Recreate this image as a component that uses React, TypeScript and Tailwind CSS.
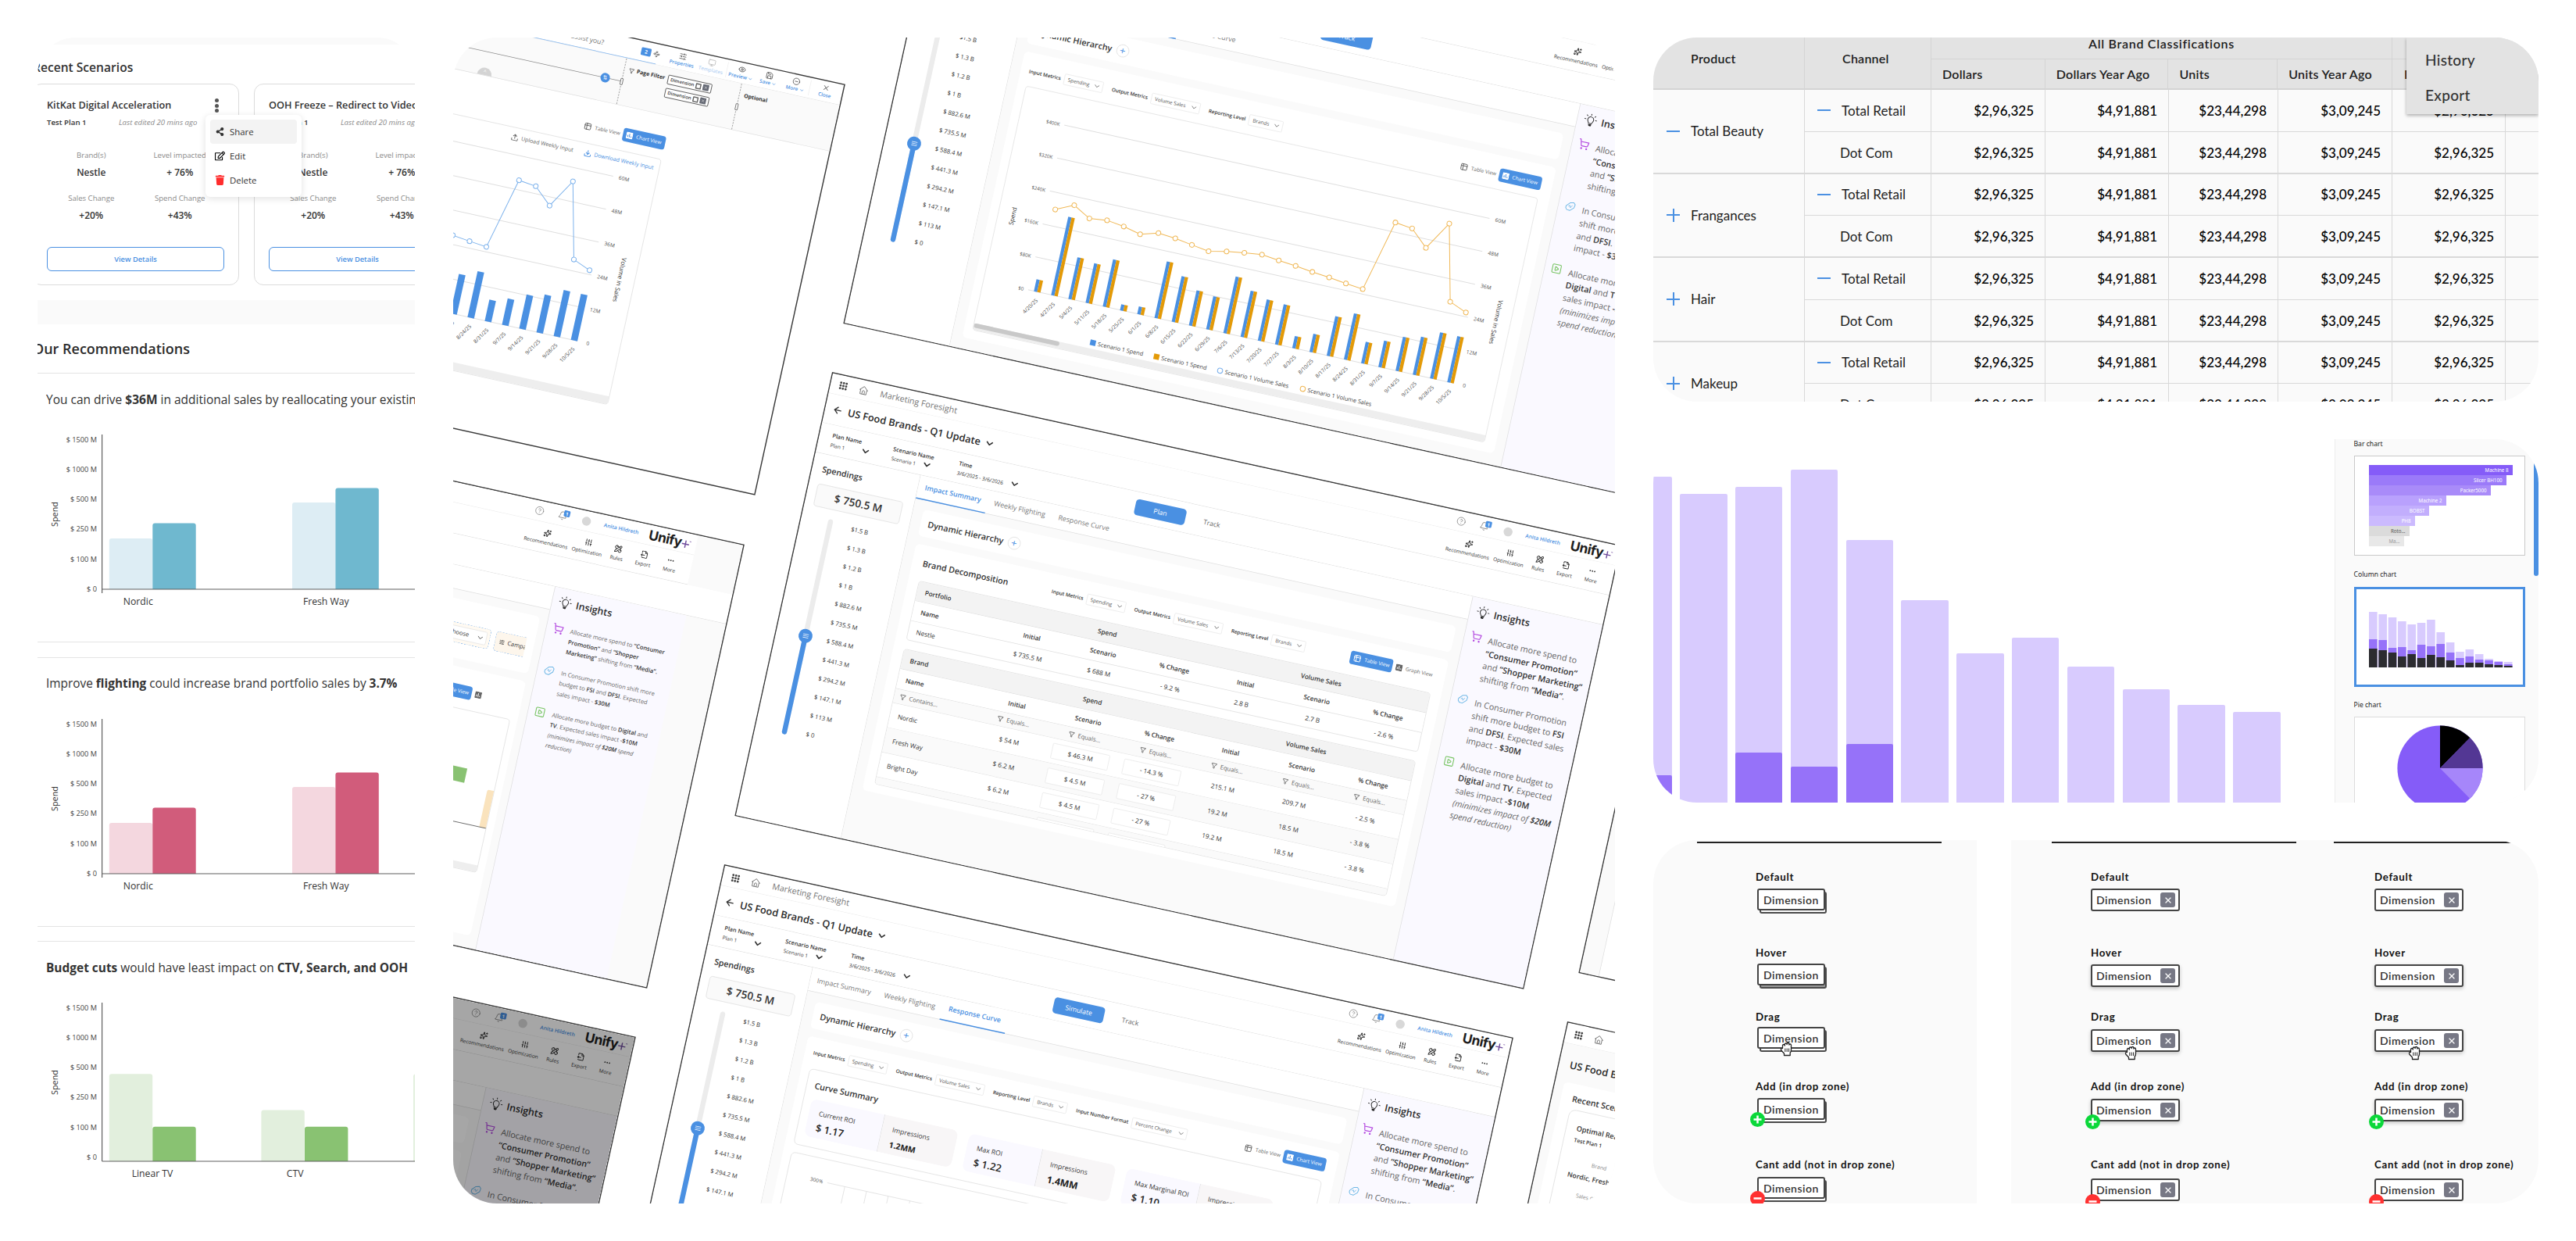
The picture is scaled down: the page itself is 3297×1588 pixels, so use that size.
import type { ReactNode } from "react";
import {
  ArrowLeft,
  Bell,
  ChevronDown,
  CircleHelp,
  CircleMinus,
  Download,
  Ellipsis,
  Eye,
  FileOutput,
  Filter,
  Monitor,
  PencilRuler,
  Save,
  ShoppingCart,
  SlidersHorizontal,
  SlidersVertical,
  Sparkles,
  SquarePlay,
  Table2,
  Upload,
  Waypoints,
  X,
} from "lucide-react";
import { FaRegEdit, FaShareAlt, FaTrash } from "react-icons/fa";

/* ------------------------------------------------------------------ */
/* Recommendations panel                                               */
/* ------------------------------------------------------------------ */

type Bar = { x: number; h: number; dark?: boolean };

type SpendChartProps = {
  light: string;
  dark: string;
  base: number;
  bars: Bar[];
  labels: { x: number; text: string }[];
};

const spendTicks = ["$ 1500 M", "$ 1000 M", "$ 500 M", "$ 250 M", "$ 100 M", "$ 0"];

function SpendChart({ light, dark, base, bars, labels }: SpendChartProps) {
  return (
    <svg width="483" height="250" viewBox="0 70 483 250" className="block">
      {spendTicks.map((tick, i) => (
        <text key={tick} x="76" y={89.5 + i * 38.3} textAnchor="end" fontSize="9.2" fill="#444">
          {tick}
        </text>
      ))}
      <text transform="translate(25.5 182) rotate(-90)" textAnchor="middle" fontSize="10.8" fill="#333">
        Spend
      </text>
      {bars.map((bar) => (
        <path
          key={bar.x}
          d={`M${bar.x} ${base}v${-(bar.h - 3)}q0 -3 3 -3h49.4q3 0 3 3v${bar.h - 3}z`}
          fill={bar.dark ? dark : light}
        />
      ))}
      <path d={`M82.6 80V283M82.6 ${base}H483`} stroke="#5f5f5f" strokeWidth="1.2" fill="none" />
      {labels.map((label) => (
        <text key={label.text} x={label.x} y={base + 19.5} textAnchor="middle" fontSize="12.2" fill="#333">
          {label.text}
        </text>
      ))}
    </svg>
  );
}

function Metric({ label, value }: { label: string; value: string }) {
  return (
    <div className="w-[117px] text-center">
      <p className="whitespace-nowrap text-[9.6px] leading-[18px] text-[#8a8a8a]">{label}</p>
      <p className="mt-[2px] text-[12px] font-semibold leading-[22px] text-[#333]">{value}</p>
    </div>
  );
}

function ScenarioCard({ title }: { title: string }) {
  return (
    <div className="h-[258px] w-[265px] shrink-0 rounded-xl border border-[#dcdcdc] bg-white px-[18px] pt-[17px]">
      <div className="flex h-5 items-center justify-between">
        <h3 className="whitespace-nowrap text-[12.7px] font-semibold text-[#333]">{title}</h3>
        <span className="flex flex-col gap-[1.5px] pr-[7px]">
          <i className="size-[5px] rounded-full bg-[#555]" />
          <i className="size-[5px] rounded-full bg-[#555]" />
          <i className="size-[5px] rounded-full bg-[#555]" />
        </span>
      </div>
      <div className="mt-[2px] flex h-5 items-center">
        <span className="w-[92px] text-[9.7px] font-semibold text-[#333]">Test Plan 1</span>
        <span className="whitespace-nowrap text-[9.6px] italic text-[#8a8a8a]">Last edited 20 mins ago</span>
      </div>
      <div className="mt-[23px] flex">
        <Metric label="Brand(s)" value="Nestle" />
        <Metric label="Level impacted" value="+ 76%" />
      </div>
      <div className="mt-[13px] flex">
        <Metric label="Sales Change" value="+20%" />
        <Metric label="Spend Change" value="+43%" />
      </div>
      <div className="mt-[29px] flex h-[31px] items-center justify-center rounded-md border border-[#4a90e2] text-[9.3px] font-semibold text-[#4a90e2]">
        View Details
      </div>
    </div>
  );
}

function RecommendationsPanel() {
  return (
    <section className="h-[1492px] w-[483px] shrink-0 overflow-hidden rounded-[48px] bg-white">
      <div className="h-[9px] bg-[#fafafa]" />
      <h2 className="-ml-[6px] mt-[18px] whitespace-nowrap text-[15.6px] font-semibold leading-[22px] text-[#333]">Recent Scenarios</h2>
      <div className="relative mt-[10px] flex">
        <div className="-ml-[7px] flex gap-[19px]">
          <ScenarioCard title="KitKat Digital Acceleration" />
          <ScenarioCard title="OOH Freeze – Redirect to Video" />
        </div>
        <div className="absolute left-[215px] top-[40px] w-[123px] rounded-md bg-white px-[6px] py-[6px] text-[11.4px] text-[#333] shadow-[0_2px_10px_rgba(0,0,0,0.12)]">
          <div className="flex h-[31px] items-center gap-[7px] rounded bg-[#f3f3f3] pl-[7px]">
            <FaShareAlt size={11} color="#333" />
            <span>Share</span>
          </div>
          <div className="flex h-[31px] items-center gap-[6px] pl-[6px]">
            <FaRegEdit size={13} color="#000" />
            <span>Edit</span>
          </div>
          <div className="flex h-[31px] items-center gap-[6px] pl-[6px]">
            <FaTrash size={13} color="#ff2d2d" />
            <span>Delete</span>
          </div>
        </div>
      </div>
      <div className="mt-[19px] h-[31px] bg-[#fafafa]" />
      <h2 className="-ml-[6px] mt-[18px] whitespace-nowrap text-[18px] font-semibold leading-[26px] text-[#2b2b2b]">Our Recommendations</h2>

      <div className="mt-[18px] h-[345px] border-y border-[#e4e4e4]">
        <p className="ml-[11px] mt-[21px] whitespace-nowrap text-[15.5px] leading-6 text-[#333]">
          You can drive <b>$36M</b> in additional sales by reallocating your existing
        </p>
        <div className="mt-[23px]">
          <SpendChart
            light="#ddedf4"
            dark="#6fb8cf"
            base={278}
            bars={[
              { x: 91.8, h: 65 },
              { x: 147.3, h: 84.6, dark: true },
              { x: 326, h: 111 },
              { x: 381.4, h: 129.5, dark: true },
            ]}
            labels={[
              { x: 128.8, text: "Nordic" },
              { x: 369.3, text: "Fresh Way" },
            ]}
          />
        </div>
      </div>

      <div className="mt-[19px] h-[345px] border-y border-[#e4e4e4]">
        <p className="ml-[11px] mt-[21px] whitespace-nowrap text-[15.4px] leading-6 text-[#333]">
          Improve <b>flighting</b> could increase brand portfolio sales by <b>3.7%</b>
        </p>
        <div className="mt-[23px]">
          <SpendChart
            light="#f4d7df"
            dark="#d15c7b"
            base={278}
            bars={[
              { x: 91.8, h: 65 },
              { x: 147.3, h: 84.6, dark: true },
              { x: 326, h: 111 },
              { x: 381.4, h: 129.5, dark: true },
            ]}
            labels={[
              { x: 128.8, text: "Nordic" },
              { x: 369.3, text: "Fresh Way" },
            ]}
          />
        </div>
      </div>

      <div className="mt-[18px] h-[345px] border-t border-[#e4e4e4]">
        <p className="ml-[11px] mt-[21px] whitespace-nowrap text-[15.45px] leading-6 text-[#333]">
          <b>Budget cuts</b> would have least impact on <b>CTV, Search, and OOH</b>
        </p>
        <div className="mt-[23px]">
          <SpendChart
            light="#e2efdd"
            dark="#89c272"
            base={283}
            bars={[
              { x: 91.8, h: 111.7 },
              { x: 147.3, h: 44.3, dark: true },
              { x: 286.4, h: 65.5 },
              { x: 342, h: 44.3, dark: true },
              { x: 481, h: 111.7 },
            ]}
            labels={[
              { x: 147, text: "Linear TV" },
              { x: 329.7, text: "CTV" },
            ]}
          />
        </div>
      </div>
    </section>
  );
}

/* ------------------------------------------------------------------ */
/* Planner screens                                                     */
/* ------------------------------------------------------------------ */

function ScreenFrame({ at, children }: { at: string; children: ReactNode }) {
  return (
    <div className={`absolute origin-top-left rotate-[12.38deg] scale-[0.718] overflow-hidden border-2 border-[#3a3a3a] bg-white text-[#333] ${at}`}>
      {children}
    </div>
  );
}

function AppsIcon() {
  return (
    <span className="grid grid-cols-3 gap-[1px]">
      {Array.from({ length: 9 }, (_, i) => (
        <i key={i} className="size-[4px] rounded-full bg-[#444]" />
      ))}
    </span>
  );
}

function HomeIcon() {
  return (
    <svg width="18" height="18" viewBox="0 0 18 18" fill="none" stroke="#666" strokeWidth="1.1">
      <path d="M1.5 9L9 2l7.5 7M3.5 7.5V16h11V7.5M7 16v-4.5a2 2 0 0 1 4 0V16" />
    </svg>
  );
}

function BulbIcon() {
  return (
    <svg width="25" height="25" viewBox="0 0 25 25" fill="none" stroke="#222" strokeWidth="1.3" strokeLinecap="round">
      <path d="M9.800 18.500c0-2-2.600-3.400-2.600-6.800a5.300 5.300 0 0 1 10.600 0c0 3.400-2.600 4.800-2.600 6.800z" />
      <path d="M10.300 20.500h4.400l-.8 2h-2.800z" fill="#222" />
      <path d="M12.500 1.500v2M4.800 4.300l1.300 1.300M20.200 4.300l-1.300 1.300M1.800 11.500h2M21.200 11.500h2" />
    </svg>
  );
}

function TagIcon() {
  return (
    <svg className="-mt-[1px] shrink-0" width="20" height="20" viewBox="0 0 20 20" fill="none" stroke="#6fb8e6" strokeWidth="1.400" strokeLinejoin="round">
      <path d="M2.500 10.500l6-6.500 6.500-1.500 3 3-1 6-6.500 6-5.500-.5-2.500-3z" />
      <path d="M6.500 10.500l2.500-2 1.500 4 3-5" strokeWidth="1.100" />
    </svg>
  );
}

function ChartTileIcon({ color }: { color: string }) {
  return (
    <svg width="12" height="12" viewBox="0 0 12 12" fill="none" className="shrink-0">
      <path d="M1.500 0h9q1.500 0 1.500 1.500v9q0 1.500-1.500 1.500h-9q-1.500 0-1.500-1.500v-9q0-1.500 1.500-1.500z" fill={color} />
      <path d="M3.200 9V5.500M6 9V2.800M8.800 9V7" stroke={color === "#fff" ? "#4a90e2" : "#fff"} strokeWidth="1.400" />
    </svg>
  );
}

function UnifyLogo() {
  return (
    <span className="flex h-6 w-[75px] items-center font-['Inter',sans-serif] text-[24px] font-bold tracking-[-0.7px] text-[#1c1c1c]">
      Unify
      <svg width="17" height="16" viewBox="0 0 17 16" className="mt-1 shrink-0">
        <path d="M7 1.500v13M0.500 8h13" stroke="#6d4a9c" strokeWidth="2" />
        <path d="M13.500 2h3" stroke="#6d4a9c" strokeWidth="1" />
      </svg>
    </span>
  );
}

// width and title are left open for the screens of which only the right part lies inside the panel
function TopBar({ width = "w-full", title = true }: { width?: string; title?: boolean }) {
  return (
    <div className={`flex h-[36px] items-center border-b border-[#ececec] bg-white pl-[16px] pr-[11px] ${width}`}>
      {title && (
        <>
          <AppsIcon />
          <span className="ml-[21px]">
            <HomeIcon />
          </span>
          <span className="ml-[21px] text-[15.1px] text-[#777]">Marketing Foresight</span>
        </>
      )}
      <CircleHelp className="ml-auto" size={17} strokeWidth={1.3} color="#777" />
      <span className="relative ml-[25px]">
        <Bell size={17} strokeWidth={1.3} color="#666" />
        <span className="absolute -right-[4px] -top-[2px] flex h-[11px] w-[11px] items-center justify-center rounded-[2px] bg-[#4a90e2] text-[8px] font-bold text-white">
          1
        </span>
      </span>
      <i className="ml-[27px] size-4 rounded-full bg-[#d8d8d8]" />
      <span className="ml-[24px] w-[66px] whitespace-nowrap text-[9.3px] font-semibold text-[#4a90e2]">Anita Hildreth</span>
      <span className="ml-[16px]">
        <UnifyLogo />
      </span>
    </div>
  );
}

const actions = [
  { label: "Recommendations", icon: Sparkles, width: "w-[90px]" },
  { label: "Optimization", icon: SlidersVertical, width: "w-[60px]" },
  { label: "Rules", icon: PencilRuler, width: "w-[48px]" },
  { label: "Export", icon: FileOutput, width: "w-[48px]" },
  { label: "More", icon: Ellipsis, width: "w-[48px]" },
];

function TitleBar({ width = "w-full", title = true }: { width?: string; title?: boolean }) {
  return (
    <div className={`flex h-[54px] items-center border-b border-[#dedede] bg-white pl-[13px] pr-[14px] ${width}`}>
      {title && (
        <>
          <ArrowLeft size={19} strokeWidth={2.4} />
          <h2 className="ml-[9px] whitespace-nowrap text-[17.8px] font-semibold text-[#2b2b2b]">US Food Brands - Q1 Update</h2>
          <ChevronDown className="ml-[7px]" size={19} strokeWidth={2.8} />
        </>
      )}
      <div className="ml-auto flex">
        {actions.map(({ label, icon: Icon, width: w }) => (
          <div key={label} className={`flex flex-col items-center gap-[1px] ${w}`}>
            <Icon size={14} strokeWidth={2.3} />
            <span className="text-[9.1px] leading-[17px]">{label}</span>
          </div>
        ))}
      </div>
    </div>
  );
}

function Field({ label, value, width }: { label: string; value: string; width: string }) {
  return (
    <div>
      <p className="text-[10.2px] font-semibold leading-[17px]">{label}</p>
      <div className={`flex h-[17px] items-center justify-between ${width}`}>
        <span className="whitespace-nowrap text-[9.2px] leading-[17px]">{value}</span>
        <ChevronDown size={19} strokeWidth={2.800} className="-mt-1" />
      </div>
    </div>
  );
}

type FilterBarProps = { mode?: string; active?: "mode" | "track"; offset?: string };

function FilterBar({ mode = "Plan", active = "mode", offset = "ml-[209px]" }: FilterBarProps) {
  const on = "bg-[#4a90e2] text-white";
  const off = "text-[#666]";
  return (
    <div className="flex h-[54px] items-center border-b border-[#dedede] bg-white pl-[23px]">
      <div className="w-[111px]">
        <Field label="Plan Name" value="Plan 1" width="w-[73px]" />
      </div>
      <div className="w-[120px]">
        <Field label="Scenario Name" value="Scenario 1" width="w-[74px]" />
      </div>
      <Field label="Time" value="3/6/2025 - 3/6/2026" width="w-[114px]" />
      <div className={`flex gap-[2px] text-[12px] ${offset}`}>
        <span className={`flex h-[29px] w-[92px] items-center justify-center rounded-md ${active === "mode" ? on : off}`}>{mode}</span>
        <span className={`flex h-[29px] w-[92px] items-center justify-center rounded-md ${active === "track" ? on : off}`}>Track</span>
      </div>
    </div>
  );
}

const amounts = ["$1.5 B", "$ 1.3 B", "$ 1.2 B", "$ 1 B", "$ 882.6 M", "$ 735.5 M", "$ 588.4 M", "$ 441.3 M", "$ 294.2 M", "$ 147.1 M", "$ 113 M", "$ 0"];

function SpendingSidebar() {
  return (
    <aside className="w-[192px] shrink-0 border-r border-[#dedede] bg-white">
      <h3 className="ml-[18px] mt-[16px] text-[14.8px] font-semibold leading-5">Spendings</h3>
      <div className="ml-[16px] mt-[17px] flex h-[41px] w-[156px] items-center justify-center rounded-md border border-[#dfdfdf] bg-[#fafafa] text-[19px] font-semibold">
        $ 750.5 M
      </div>
      <div className="mt-[9px] flex">
        <div className="relative ml-[48px] mt-[8px] h-[392px] w-[9px] rounded-full bg-[#ececec]">
          <div className="absolute bottom-0 h-[180px] w-[9px] rounded-full bg-[#4a90e2]" />
          <div className="absolute -left-[8px] top-[200px] flex size-[25px] flex-col items-center justify-center gap-[2px] rounded-full bg-[#4a90e2]">
            <i className="h-px w-[10px] bg-white" />
            <i className="h-px w-[10px] bg-white" />
            <i className="h-px w-[10px] bg-white" />
          </div>
        </div>
        <div className="ml-[34px]">
          {amounts.map((amount) => (
            <p key={amount} className="text-[10.8px] leading-[34px]">
              {amount}
            </p>
          ))}
        </div>
      </div>
    </aside>
  );
}

const tabNames = ["Impact Summary", "Weekly Flighting", "Response Curve"];

function Tabs({ active, offset = "" }: { active: string; offset?: string }) {
  return (
    <div className={`flex h-[42px] border-b border-[#dedede] bg-white text-[12.4px] ${offset}`}>
      {tabNames.map((tab) => (
        <span
          key={tab}
          className={
            tab === active
              ? "flex h-[42px] items-center border-b-2 border-[#4a90e2] px-3 font-semibold text-[#4a90e2]"
              : "flex h-[42px] items-center px-3 text-[#7a7a7a]"
          }
        >
          {tab}
        </span>
      ))}
    </div>
  );
}

function Hierarchy() {
  return (
    <div className="flex h-[48px] items-center gap-[8px] rounded-lg bg-white px-[13px]">
      <h3 className="text-[15px] font-semibold">Dynamic Hierarchy</h3>
      <span className="flex size-[23px] items-center justify-center rounded-full border border-[#dcdcdc] text-[18px] leading-none text-[#4a90e2]">+</span>
    </div>
  );
}

function Select({ label, value, width }: { label: string; value: string; width: string }) {
  return (
    <div className="flex items-center gap-[6px]">
      <span className="whitespace-nowrap text-[9px] font-semibold">{label}</span>
      <span className={`flex h-[20px] items-center justify-between whitespace-nowrap rounded-[2px] border border-[#e8e8e8] pl-[6px] pr-[3px] text-[9px] text-[#555] ${width}`}>
        {value}
        <ChevronDown size={14} strokeWidth={1.500} />
      </span>
    </div>
  );
}

function MetricSelects({ withFormat = false }: { withFormat?: boolean }) {
  return (
    <div className="flex gap-[16px]">
      <Select label="Input Metrics" value="Spending" width="w-[71px]" />
      <Select label="Output Metrics" value="Volume Sales" width="w-[89px]" />
      <Select label="Reporting Level" value="Brands" width="w-[62px]" />
      {withFormat && <Select label="Input Number Format" value="Percent Change" width="w-[101px]" />}
    </div>
  );
}

function ViewToggle({ active, second = "Chart View" }: { active: "table" | "chart"; second?: string }) {
  const on = "bg-[#4a90e2] text-white";
  const off = "text-[#666]";
  return (
    <div className="flex text-[9.2px]">
      <span className={`flex h-[24px] w-[77px] items-center gap-[6px] whitespace-nowrap rounded-[5px] pl-[6px] ${active === "table" ? on : off}`}>
        <Table2 size={14} strokeWidth={2.200} />
        Table View
      </span>
      <span className={`flex h-[24px] w-[77px] items-center gap-[6px] whitespace-nowrap rounded-[5px] pl-[6px] ${active === "chart" ? on : off}`}>
        <ChartTileIcon color={active === "chart" ? "#fff" : "#666"} />
        {second}
      </span>
    </div>
  );
}

function Strong({ children }: { children: ReactNode }) {
  return <b className="font-semibold text-[#333]">{children}</b>;
}

function Insights({ compact = false }: { compact?: boolean }) {
  const body = compact ? "text-[10.5px] leading-[18.6px]" : "text-[15px] leading-[22.6px]";
  const gap = compact ? "gap-[20px] mt-[27px]" : "gap-[23px] mt-[24px]";
  return (
    <aside className="w-[240px] shrink-0 border-l border-[#dedede] bg-[#faf9ff]">
      <div className="mt-[12px] flex h-6 items-center gap-[7px] pl-[11px]">
        <BulbIcon />
        <h3 className="text-[17.4px] font-semibold text-[#2b2b2b]">Insights</h3>
      </div>
      <div className={`flex flex-col whitespace-nowrap pl-[11px] text-[#666] ${body} ${gap}`}>
        <div className="flex gap-[12px]">
          <ShoppingCart className="-mt-[1px] shrink-0" size={20} strokeWidth={2} color="#b44be0" />
          {compact ? (
            <p>
              Allocate more spend to <Strong>“Consumer</Strong>
              <br />
              <Strong>Promotion”</Strong> and <Strong>“Shopper</Strong>
              <br />
              <Strong>Marketing”</Strong> shifting from <Strong>“Media”.</Strong>
            </p>
          ) : (
            <p>
              Allocate more spend to
              <br />
              <Strong>“Consumer Promotion”</Strong>
              <br />
              and <Strong>“Shopper Marketing”</Strong>
              <br />
              shifting from <Strong>“Media”</Strong>.
            </p>
          )}
        </div>
        <div className="flex gap-[12px]">
          <TagIcon />
          {compact ? (
            <p>
              In Consumer Promotion shift more
              <br />
              budget to <Strong>FSI</Strong> and <Strong>DFSI</Strong>. Expected
              <br />
              sales impact - <Strong>$30M</Strong>
            </p>
          ) : (
            <p>
              In Consumer Promotion
              <br />
              shift more budget to <Strong>FSI</Strong>
              <br />
              and <Strong>DFSI</Strong>. Expected sales
              <br />
              impact - <Strong>$30M</Strong>
            </p>
          )}
        </div>
        <div className="flex gap-[12px]">
          <SquarePlay className="-mt-[1px] shrink-0" size={20} strokeWidth={1.8} color="#77c463" />
          {compact ? (
            <p>
              Allocate more budget to <Strong>Digital</Strong> and
              <br />
              <Strong>TV</Strong>. Expected sales impact <Strong>-$10M</Strong>
              <br />
              <i>
                (minimizes impact of <Strong>$20M</Strong> spend
                <br />
                reduction)
              </i>
            </p>
          ) : (
            <p>
              Allocate more budget to
              <br />
              <Strong>Digital</Strong> and <Strong>TV</Strong>. Expected
              <br />
              sales impact <Strong>-$10M</Strong>
              <br />
              <i>
                (minimizes impact of <Strong>$20M</Strong>
                <br />
                spend reduction)
              </i>
            </p>
          )}
        </div>
      </div>
    </aside>
  );
}

type PlannerProps = FilterBarProps & { at: string; tab: string; tabOffset?: string; children: ReactNode };

function PlannerScreen({ at, tab, tabOffset, children, ...filter }: PlannerProps) {
  return (
    <ScreenFrame at={`h-[810px] w-[1440px] ${at}`}>
      <TopBar />
      <TitleBar />
      <FilterBar {...filter} />
      <div className="flex h-[664px]">
        <SpendingSidebar />
        <div className="flex-1 bg-[#fafafa]">
          <Tabs active={tab} offset={tabOffset} />
          <div className="flex flex-col gap-[14px] py-[16px] pl-[18px] pr-[17px]">
            <Hierarchy />
            {children}
          </div>
        </div>
        <Insights />
      </div>
    </ScreenFrame>
  );
}

function ColumnHeads() {
  return (
    <div className="flex h-[36px] items-center border-b border-[#dedede] bg-white font-semibold">
      <span className="w-[152px] pl-[14px]">Name</span>
      {["Initial", "Scenario", "% Change", "Initial", "Scenario", "% Change"].map((head, i) => (
        <span key={i} className="w-[130px] text-center">
          {head}
        </span>
      ))}
    </div>
  );
}

function GroupHead({ title }: { title: string }) {
  return (
    <div className="flex h-[36px] items-center border-b border-[#dedede] bg-[#f3f3f3] font-semibold">
      <span className="w-[152px] pl-[14px]">{title}</span>
      <span className="w-[390px] text-center">Spend</span>
      <span className="w-[390px] text-center">Volume Sales</span>
    </div>
  );
}

const brandRows = [
  { name: "Nordic", cells: ["$ 54 M", "$ 46.3 M", "- 14.3 %", "215.1 M", "209.7 M", "- 2.5 %"], bg: "bg-white" },
  { name: "Fresh Way", cells: ["$ 6.2 M", "$ 4.5 M", "- 27 %", "19.2 M", "18.5 M", "- 3.8 %"], bg: "bg-[#fafafa]" },
  { name: "Bright Day", cells: ["$ 6.2 M", "$ 4.5 M", "- 27 %", "19.2 M", "18.5 M", "- 3.8 %"], bg: "bg-white" },
  { name: "", cells: ["", "", "", "", "", ""], bg: "bg-[#fafafa]" },
];

function BrandDecomposition() {
  return (
    <div className="h-[450px] rounded-lg bg-white px-[19px]">
      <div className="flex h-[64px] items-center">
        <h3 className="w-[235px] text-[14.9px] font-semibold">Brand Decomposition</h3>
        <MetricSelects />
        <div className="ml-auto">
          <ViewToggle active="table" second="Graph View" />
        </div>
      </div>
      <div className="h-[108px] overflow-hidden rounded-md border border-[#dedede] text-[11.5px]">
        <GroupHead title="Portfolio" />
        <ColumnHeads />
        <div className="flex h-[36px] items-center">
          <span className="w-[152px] pl-[14px]">Nestle</span>
          {["$ 735.5 M", "$ 688 M", "- 9.2 %", "2.8 B", "2.7 B", "- 2.6 %"].map((cell) => (
            <span key={cell} className="w-[130px] text-center">
              {cell}
            </span>
          ))}
        </div>
      </div>
      <div className="mt-[16px] h-[247px] overflow-hidden rounded-md border border-[#dedede] text-[11.5px]">
        <GroupHead title="Brand" />
        <ColumnHeads />
        <div className="flex h-[26px] items-center border-b border-[#e4e4e4] bg-[#fafafa] text-[10.7px] text-[#666]">
          <span className="flex w-[152px] items-center gap-[6px] pl-[10px]">
            <Filter size={11} strokeWidth={2.5} />
            Contains...
          </span>
          {Array.from({ length: 6 }, (_, i) => (
            <span key={i} className="flex w-[130px] items-center justify-center gap-[6px]">
              <Filter size={11} strokeWidth={2.5} />
              Equals...
            </span>
          ))}
        </div>
        {brandRows.map((row, r) => (
          <div key={r} className={`flex h-[45px] items-center border-b border-[#e4e4e4] ${row.bg}`}>
            <span className="w-[152px] pl-[14px]">{row.name}</span>
            {row.cells.map((cell, i) => (
              <span key={i} className="flex w-[130px] justify-center">
                <span
                  className={
                    i === 1 || i === 2
                      ? "flex h-[28px] w-[104px] items-center justify-center rounded-[2px] border border-[#e8e8e8] bg-white"
                      : "flex h-[28px] items-center"
                  }
                >
                  {cell}
                </span>
              </span>
            ))}
          </div>
        ))}
      </div>
    </div>
  );
}

const weeks = [
  { date: "4/20/25", spend: 22, sales: 528.4 },
  { date: "4/27/25", spend: 143, sales: 513.7 },
  { date: "5/4/25", spend: 76, sales: 531 },
  { date: "5/11/25", spend: 72, sales: 527.4 },
  { date: "5/18/25", spend: 86, sales: 531.8 },
  { date: "5/25/25", spend: 11, sales: 539 },
  { date: "6/1/25", spend: 14, sales: 530 },
  { date: "6/8/25", spend: 103, sales: 532.8 },
  { date: "6/15/25", spend: 83, sales: 537.8 },
  { date: "6/22/25", spend: 64, sales: 542.5 },
  { date: "6/29/25", spend: 60, sales: 536 },
  { date: "7/6/25", spend: 103, sales: 531.5 },
  { date: "7/13/25", spend: 84, sales: 528 },
  { date: "7/20/25", spend: 75, sales: 531.6 },
  { date: "7/27/25", spend: 73, sales: 534.8 },
  { date: "8/3/25", spend: 22, sales: 538.8 },
  { date: "8/10/25", spend: 33, sales: 542 },
  { date: "8/17/25", spend: 72, sales: 546 },
  { date: "8/24/25", spend: 84, sales: 549.4 },
  { date: "8/31/25", spend: 39, sales: 421 },
  { date: "9/7/25", spend: 48, sales: 425 },
  { date: "9/14/25", spend: 62, sales: 453.5 },
  { date: "9/21/25", spend: 69, sales: 402.4 },
  { date: "9/28/25", spend: 84, sales: 538 },
  { date: "10/5/25", spend: 84, sales: 550.7 },
];

const weekX = (i: number) => 97.5 + i * 31.43;

// from: first week that is drawn, the builder screen shows only the tail of the season
function WeeklyChart({ compare, shift, from = 0 }: { compare: boolean; shift: number; from?: number }) {
  const stroke = compare ? "#f0b856" : "#7db2ec";
  const points = weeks.map((week, i) => ({ ...week, x: weekX(i) })).slice(from);
  return (
    <svg width="933" height="432" viewBox={`0 ${shift} 933 432`} className="block">
      {["$400K", "$320K", "$240K", "$160K", "$80K", "$0"].map((tick, i) => (
        <g key={tick}>
          <path d={`M81 ${53 + i * 60.1}H857`} stroke="#dcdcdc" strokeWidth="1.2" />
          {compare && (
            <text x="73" y={56.5 + i * 60.1} textAnchor="end" fontSize="8.7" fill="#555">
              {tick}
            </text>
          )}
        </g>
      ))}
      {["60M", "48M", "36M", "24M", "12M", "0"].map((tick, i) => (
        <text key={tick} x="877" y={56.5 + i * 60.1} textAnchor="middle" fontSize="9.3" fill="#555">
          {tick}
        </text>
      ))}
      {compare && (
        <text transform="translate(30 231) rotate(-90)" textAnchor="middle" fontSize="11" fill="#333">
          Spend
        </text>
      )}
      <text transform="translate(904 231) rotate(90)" textAnchor="middle" fontSize="11" fill="#333">
        Volume in Sales
      </text>
      {points.map((point) => (
        <g key={point.date}>
          <rect x={point.x - 6} y={354 - point.spend} width={compare ? 6 : 12} height={point.spend} fill="#4a90e2" />
          {compare && <rect x={point.x} y={354 - point.spend} width="6" height={point.spend} fill="#e39a08" />}
          <text transform={`translate(${point.x + 5} 369) rotate(-57)`} textAnchor="end" fontSize="9.3" fill="#444">
            {point.date}
          </text>
        </g>
      ))}
      <polyline points={points.map((point) => `${point.x},${point.sales - 325}`).join(" ")} fill="none" stroke={stroke} strokeWidth="1.4" />
      {points.map((point) => (
        <circle key={point.date} cx={point.x} cy={point.sales - 325} r="4.2" fill="#fff" stroke={stroke} strokeWidth="1.4" />
      ))}
      {compare && (
        <g fontSize="10.3" fill="#444">
          <rect x="209" y="416" width="10" height="10" fill="#4a90e2" />
          <text x="223" y="425">Scenario 1 Spend</text>
          <rect x="325" y="416" width="10" height="10" fill="#e39a08" />
          <text x="339" y="425">Scenario 1 Spend</text>
          <circle cx="446" cy="421" r="4.5" fill="#fff" stroke="#7db2ec" strokeWidth="1.5" />
          <text x="455" y="425">Scenario 1 Volume Sales</text>
          <circle cx="597" cy="421" r="4.5" fill="#fff" stroke="#f0b856" strokeWidth="1.5" />
          <text x="606" y="425">Scenario 1 Volume Sales</text>
        </g>
      )}
    </svg>
  );
}

function WeeklyFlighting() {
  return (
    <div className="h-[522px] rounded-lg bg-white pl-[15px] pr-[20px]">
      <div className="flex h-[60px] items-center pt-2">
        <MetricSelects />
        <div className="ml-auto">
          <ViewToggle active="chart" />
        </div>
      </div>
      <div className="h-[446px] overflow-hidden rounded-md border border-[#e0e0e0]">
        <WeeklyChart compare shift={0} />
        <div className="h-[14px] bg-[#eee]">
          <div className="h-[8px] w-[156px] rounded-full bg-[#c9c9c9]" />
        </div>
      </div>
    </div>
  );
}

function Kpi({ label, value, impressions, large }: { label: string; value: string; impressions: string; large?: boolean }) {
  return (
    <div className="flex h-[68px] w-[268px] shrink-0 overflow-hidden rounded-xl">
      <div className="w-[134px] border-r border-[#dcdcdc] bg-[#faf9ff] pl-[18px] pt-[14px]">
        <p className="whitespace-nowrap text-[12px] leading-[20px]">{label}</p>
        <p className="text-[18px] font-semibold leading-[31px] text-[#222]">{value}</p>
      </div>
      <div className="w-[134px] bg-[#f8f6f7] pl-[18px] pt-[14px]">
        <p className="text-[12px] leading-[20px]">Impressions</p>
        <p className={`font-bold leading-[33px] text-[#222] ${large ? "text-[17px]" : "text-[14.5px]"}`}>{impressions}</p>
      </div>
    </div>
  );
}

function ResponseCurve() {
  return (
    <div className="h-[522px] rounded-lg bg-white pl-[15px] pr-[20px]">
      <div className="flex h-[56px] items-center">
        <MetricSelects withFormat />
        <div className="ml-auto">
          <ViewToggle active="chart" />
        </div>
      </div>
      <div className="h-[138px] rounded-lg border border-[#dedede] pl-[14px] pt-[16px]">
        <h3 className="text-[15px] font-semibold leading-[22px]">Curve Summary</h3>
        <div className="mt-[13px] flex gap-[20px]">
          <Kpi label="Current ROI" value="$ 1.17" impressions="1.2MM" />
          <Kpi label="Max ROI" value="$ 1.22" impressions="1.4MM" large />
          <Kpi label="Max Marginal ROI" value="$ 1.10" impressions="1.1MM" />
        </div>
      </div>
      <div className="mt-[14px] h-[290px] rounded-lg border border-[#dedede]">
        <svg width="933" height="280" viewBox="0 0 933 280">
          <text x="42" y="43" fontSize="9" fill="#555">
            300%
          </text>
          <path d="M73 40H860" stroke="#dcdcdc" />
          {Array.from({ length: 20 }, (_, i) => (
            <path key={i} d={`M${105 + i * 39.6} 40V280`} stroke="#dcdcdc" />
          ))}
        </svg>
      </div>
    </div>
  );
}

function FilterChip() {
  return (
    <span className="flex h-[17px] w-[80px] items-center gap-[3px] rounded-[2px] border border-[#333] bg-white pl-[4px] text-[8.3px] font-semibold">
      <span className="w-[43px]">Dimension</span>
      <i className="size-[10px] shrink-0 rounded-[1px] border-2 border-[#666]" />
      <i className="flex size-[11px] shrink-0 items-center justify-center rounded-[1px] bg-[#666a75]">
        <X size={7} color="#fff" />
      </i>
    </span>
  );
}

type BuilderToolProps = { icon: typeof Eye; label: string; width: string; faded?: boolean; menu?: boolean };

function BuilderTool({ icon: Icon, label, width, faded, menu }: BuilderToolProps) {
  return (
    <div className={`flex flex-col items-center ${width} ${faded ? "opacity-40" : ""}`}>
      <Icon size={14} strokeWidth={1.7} color="#444" />
      <span className="flex items-center gap-[2px] text-[8.8px] font-semibold leading-[13px] text-[#4a90e2]">
        {label}
        {menu && <ChevronDown size={9} />}
      </span>
    </div>
  );
}

function BuilderScreen() {
  return (
    <ScreenFrame at="h-[750px] w-[1440px] -left-[508.4px] -top-[162.2px]">
      <div className="flex h-[37px] items-center border-b border-[#e4e4e4]">
        <div className="flex h-[36px] w-[1100px] items-center justify-end border-b border-[#7db2ec]">
          <span className="mr-[68px] text-[12px] text-[#777]">assist you?</span>
          <span className="mr-[12px] flex h-[14px] w-[18px] items-center justify-center rounded-[2px] bg-[#4a90e2] text-[9px] font-bold text-white">2</span>
        </div>
        <Waypoints size={12} color="#666" className="-ml-2 mr-[14px]" />
        <BuilderTool icon={SlidersHorizontal} label="Properties" width="w-[54px]" />
        <BuilderTool icon={Monitor} label="Templates" width="w-[52px]" faded />
        <div className="ml-[2px] h-[28px] border-l border-[#eee]" />
        <BuilderTool icon={Eye} label="Preview" width="w-[52px]" menu />
        <BuilderTool icon={Save} label="Save" width="w-[48px]" menu />
        <BuilderTool icon={CircleMinus} label="More" width="w-[50px]" menu />
        <div className="h-[28px] border-l border-[#eee]" />
        <BuilderTool icon={X} label="Close" width="w-[56px]" />
      </div>
      <div className="flex h-[84px] border-b border-[#dedede] bg-[#fafafa]">
        <div className="relative flex w-[1048px] items-center border-r border-dashed border-[#888]">
          <div className="h-px w-full bg-[#8a8a8a]" />
          <i className="absolute bottom-0 left-[793px] flex h-[13px] w-[26px] items-center justify-center rounded-t-full bg-[#d4d4d4] text-[9px] not-italic text-white">^</i>
          <i className="absolute left-[1009px] flex size-[17px] items-center justify-center rounded-full bg-[#4a90e2] text-[10px] not-italic text-white">⇅</i>
          <i className="absolute -right-[3px] h-[12px] w-[5px] rounded-[1px] border border-[#555] bg-white" />
        </div>
        <div className="relative flex w-[210px] items-center border-r border-dashed border-[#888]">
          <div className="mb-[44px] flex w-[79px] items-center gap-[4px] pl-[8px]">
            <Filter size={10} />
            <span className="whitespace-nowrap text-[9.8px] font-bold">Page Filter</span>
          </div>
          <div className="flex flex-col gap-[7px] pb-[18px]">
            <FilterChip />
            <FilterChip />
          </div>
          <i className="absolute -right-[3px] h-[12px] w-[5px] rounded-[1px] border border-[#555] bg-white" />
        </div>
        <span className="pl-[8px] pt-[13px] text-[9.8px] font-bold">Optional</span>
      </div>
      <div className="ml-[211px] w-[936px]">
        <div className="flex h-[78px] items-end justify-end pb-[17px]">
          <ViewToggle active="chart" />
        </div>
        <div className="h-[448px] overflow-hidden rounded-md border border-[#dedede]">
          <div className="flex h-[34px] items-center justify-end gap-[5px] pr-[10px] text-[9.8px] text-[#666]">
            <Upload size={14} strokeWidth={2.3} />
            <span className="mr-[14px]">Upload Weekly Input</span>
            <Download size={14} strokeWidth={2.3} color="#4a90e2" />
            <span className="text-[#4a90e2]">Download Weekly Input</span>
          </div>
          <div className="h-[398px] overflow-hidden">
            <WeeklyChart compare={false} shift={40} from={16} />
          </div>
          <div className="h-[15px] bg-[#eee]" />
        </div>
      </div>
    </ScreenFrame>
  );
}

function FlightScreen() {
  return (
    <ScreenFrame at="h-[810px] w-[1440px] -left-[637.4px] top-[426.7px]">
      <div className="bg-[#fafafa]">
        <TopBar width="w-[1354px]" title={false} />
        <TitleBar width="w-[1354px]" title={false} />
      </div>
      <div className="h-[54px] border-b border-[#dedede] bg-white" />
      <div className="flex h-[664px] bg-[#fafafa]">
        <div className="w-[1124px]">
          <div className="h-[42px] border-b border-[#dedede] bg-white" />
          <div className="mr-[14px] mt-[16px] flex h-[104px] items-center justify-end gap-[9px] rounded-lg bg-white pr-[15px] pt-[14px] text-[10.5px]">
            <div className="flex h-[36px] w-[120px] items-center rounded-md border border-dashed border-[#7db2ec] bg-[#fffaf2] px-[5px]">
              <span className="flex h-[24px] w-full items-center justify-between rounded-[3px] border border-[#e4e4e4] bg-white pl-[38px] pr-[3px]">
                Choose <ChevronDown size={15} strokeWidth={1.5} />
              </span>
            </div>
            <div className="h-[36px] w-[55px] overflow-hidden">
              <div className="flex h-[36px] w-[120px] items-center gap-[5px] rounded-md border border-dashed border-[#7db2ec] bg-[#fdf6ec] px-[7px]">
                <SlidersHorizontal size={10} className="shrink-0" />
                Campaign
              </div>
            </div>
          </div>
          <div className="mr-[14px] mt-[14px] h-[464px] rounded-lg bg-white pr-[13px]">
            <div className="flex h-[72px] items-center justify-end overflow-hidden pt-3">
              <ViewToggle active="table" second="" />
            </div>
            <div className="h-[280px] overflow-hidden rounded-md border border-[#dedede]">
              <svg width="1096" height="266" viewBox="0 0 1096 266" className="block">
                <rect x="980" y="101" width="60" height="26" fill="#89c272" />
                <path d="M1083 198v-64q0 -4 4 -4h12v68z" fill="#fae3bd" />
                <path d="M0 198H1096" stroke="#444" />
              </svg>
              <div className="h-[13px] bg-[#eee]" />
            </div>
          </div>
        </div>
        <Insights compact />
      </div>
    </ScreenFrame>
  );
}

function DimmedScreen() {
  return (
    <ScreenFrame at="h-[810px] w-[1440px] -left-[776.1px] top-[1057.4px]">
      <TopBar title={false} />
      <TitleBar title={false} />
      <div className="h-[54px] border-b border-[#dedede] bg-white" />
      <div className="flex h-[664px] bg-[#fafafa]">
        <div className="w-[1196px]">
          <div className="h-[42px] border-b border-[#dedede] bg-white" />
          <div className="mr-[17px] mt-[16px] h-[48px] rounded-lg bg-white" />
          <div className="mr-[17px] mt-[14px] h-[450px] rounded-lg bg-white" />
        </div>
        <Insights />
      </div>
      <div className="absolute inset-0 bg-black/35" />
    </ScreenFrame>
  );
}

function HomeScreen() {
  return (
    <ScreenFrame at="h-[810px] w-[1440px] left-[1425.7px] top-[1259.3px]">
      <div className="flex h-[36px] items-center border-b border-[#ececec] bg-white pl-[16px]">
        <AppsIcon />
        <span className="ml-[21px]">
          <HomeIcon />
        </span>
      </div>
      <div className="h-[774px] bg-[#fafafa] pl-[19px] pt-[24px]">
        <h2 className="text-[17.8px] font-semibold leading-6 text-[#2b2b2b]">US Food Brands</h2>
        <div className="-ml-[3px] mt-[20px] h-[600px] w-[1390px] rounded-lg bg-white pl-[20px] pt-[16px]">
          <h3 className="text-[14.8px] font-semibold leading-5">Recent Scenarios</h3>
          <div className="mt-[9px] h-[280px] w-[300px] rounded-xl border border-[#dcdcdc] pl-[18px] pt-[20px]">
            <h4 className="text-[12.7px] font-semibold leading-5">Optimal Reallocation</h4>
            <p className="mt-[3px] text-[9.7px] font-semibold leading-[18px]">Test Plan 1</p>
            <div className="mt-[20px] w-[108px] text-center">
              <p className="text-[9.6px] leading-[18px] text-[#8a8a8a]">Brand</p>
              <p className="mt-[4px] whitespace-nowrap text-[12px] font-semibold leading-[22px]">Nordic, Fresh Way</p>
              <p className="mt-[14px] text-[9.6px] leading-[18px] text-[#8a8a8a]">Sales Change</p>
            </div>
          </div>
        </div>
      </div>
    </ScreenFrame>
  );
}

function ScreensPanel() {
  return (
    <section className="relative h-[1492px] w-[1487px] shrink-0 overflow-hidden rounded-[56px] bg-white">
      <BuilderScreen />
      <PlannerScreen at="left-[624px] -top-[202px]" tab="Weekly Flighting" tabOffset="pl-[32px]" mode="Simulate" active="track" offset="ml-[257px]">
        <WeeklyFlighting />
      </PlannerScreen>
      <FlightScreen />
      <PlannerScreen at="left-[485.4px] top-[428.3px]" tab="Impact Summary">
        <BrandDecomposition />
      </PlannerScreen>
      <ScreenFrame at="h-[810px] w-[1440px] left-[1565.3px] top-[629.4px]">
        <div className="flex h-full">
          <div className="w-[35px] border-r border-[#dedede] bg-[#fafafa]" />
        </div>
      </ScreenFrame>
      <DimmedScreen />
      <PlannerScreen at="left-[347px] top-[1058.3px]" tab="Response Curve" mode="Simulate" offset="ml-[257px]">
        <ResponseCurve />
      </PlannerScreen>
      <HomeScreen />
    </section>
  );
}

/* ------------------------------------------------------------------ */
/* Brand classification table                                          */
/* ------------------------------------------------------------------ */

const products = [
  { name: "Total Beauty", open: true },
  { name: "Frangances", open: false },
  { name: "Hair", open: false },
  { name: "Makeup", open: false },
];

const valueCells = [
  { value: "$2,96,325", width: "w-[146px]" },
  { value: "$4,91,881", width: "w-[158px]" },
  { value: "$23,44,298", width: "w-[140px]" },
  { value: "$3,09,245", width: "w-[146px]" },
  { value: "$2,96,325", width: "w-[145px]" },
];

function Sign({ minus }: { minus: boolean }) {
  return (
    <span className="relative flex size-[17px] shrink-0 items-center justify-center">
      <i className="h-[2px] w-full bg-[#4a90e2]" />
      {!minus && <i className="absolute h-full w-[2px] bg-[#4a90e2]" />}
    </span>
  );
}

function TablePanel() {
  return (
    <section className="relative h-[466px] w-[1133px] overflow-hidden rounded-[56px] bg-[#fafafa] font-['Lato',sans-serif] text-[17px] text-[#1d1d1d]">
      <div className="-mt-[11px] flex h-[78px] border-b-2 border-[#d4d4d4] bg-[#e3e3e3] text-[16px] font-semibold tracking-[0.25px]">
        <div className="flex w-[194px] items-center border-r border-[#d4d4d4] pl-[48px]">Product</div>
        <div className="flex w-[162px] items-center border-r border-[#d4d4d4] pl-[48px]">Channel</div>
        <div className="w-[590px] border-r border-[#d4d4d4]">
          <div className="flex h-[39px] items-center justify-center border-b border-[#d4d4d4] tracking-[0.7px]">All Brand Classifications</div>
          <div className="flex h-[37px]">
            <div className="flex w-[146px] items-center border-r border-[#d4d4d4] pl-[14px]">Dollars</div>
            <div className="flex w-[158px] items-center border-r border-[#d4d4d4] pl-[14px]">Dollars Year Ago</div>
            <div className="flex w-[140px] items-center border-r border-[#d4d4d4] pl-[14px]">Units</div>
            <div className="flex w-[146px] items-center pl-[14px]">Units Year Ago</div>
          </div>
        </div>
        <div className="w-[187px] shrink-0">
          <div className="h-[39px] border-b border-[#d4d4d4]" />
          <div className="flex h-[37px] items-center pl-[15px]">D</div>
        </div>
      </div>
      {products.map((product) => (
        <div key={product.name} className="flex h-[107.6px] border-b-2 border-[#d9d9d9]">
          <div className="flex w-[194px] shrink-0 items-center gap-[14px] border-r border-[#d9d9d9] pl-[17px]">
            <Sign minus={product.open} />
            {product.name}
          </div>
          <div>
            {["Total Retail", "Dot Com"].map((channel) => (
              <div key={channel} className={`flex h-[53.5px] w-[939px] ${channel === "Total Retail" ? "border-b border-[#d9d9d9]" : ""}`}>
                <div className="flex w-[162px] items-center gap-[14px] border-r border-[#d9d9d9] pl-[16px]">
                  {channel === "Total Retail" ? <Sign minus /> : <span className="w-[15px]" />}
                  {channel}
                </div>
                {valueCells.map((cell, i) => (
                  <div key={i} className={`flex items-center justify-end border-r border-[#d9d9d9] pr-[14px] font-medium text-black ${cell.width}`}>
                    {cell.value}
                  </div>
                ))}
              </div>
            ))}
          </div>
        </div>
      ))}
      <div className="absolute right-0 top-0 h-[98px] w-[169px] bg-[#e3e3e3] pl-[24px] pt-[6px] text-[19px] font-medium tracking-[0.3px] text-[#333] shadow-[0_2px_4px_rgba(0,0,0,0.3)]">
        <p className="leading-[45px]">History</p>
        <p className="leading-[45px]">Export</p>
      </div>
    </section>
  );
}

/* ------------------------------------------------------------------ */
/* Chart picker                                                        */
/* ------------------------------------------------------------------ */

const bigBars = [
  { h: 417, dark: 35 },
  { h: 395, dark: 0 },
  { h: 404, dark: 64 },
  { h: 426, dark: 46 },
  { h: 336, dark: 75 },
  { h: 259, dark: 0 },
  { h: 191, dark: 0 },
  { h: 211, dark: 0 },
  { h: 174, dark: 0 },
  { h: 145, dark: 0 },
  { h: 125, dark: 0 },
  { h: 116, dark: 0 },
];

const machines = [
  { name: "Machine 8", style: "w-[184px] bg-[#855cf8] text-white" },
  { name: "Slicer BH100", style: "w-[176px] bg-[#9b7af9] text-white" },
  { name: "Packer5000", style: "w-[156px] bg-[#a98bf9] text-white" },
  { name: "Machine 2", style: "w-[99px] bg-[#b9a1fd] text-white" },
  { name: "BOBST", style: "w-[77px] bg-[#c2aefd] text-white" },
  { name: "PH8", style: "w-[59px] bg-[#cbbafe] text-white" },
  { name: "Roto...", style: "w-[52px] bg-[#dbdbdb] text-[#555]" },
  { name: "Ma...", style: "w-[45px] bg-[#e8e8e8] text-[#999]" },
];

// total, purple and black heights of every column
const columns = [
  [71, 36, 24],
  [68, 35, 22],
  [64, 25, 19],
  [59, 26, 14],
  [55, 22, 17],
  [57, 29, 12],
  [61, 27, 16],
  [45, 30, 13],
  [32, 19, 9],
  [20, 12, 3],
  [23, 14, 6],
  [17, 10, 6],
  [11, 9, 4],
  [8, 7, 3],
  [7, 4, 2],
];

function ChartPickerPanel() {
  return (
    <section className="flex h-[465px] w-[1133px] overflow-hidden rounded-[56px] bg-white">
      <div className="-ml-[36.5px] flex w-[908px] shrink-0 items-end gap-[10.5px]">
        {bigBars.map((bar, i) => (
          <div key={i} className="flex w-[60.3px] shrink-0 items-end rounded-t-[2px] bg-[#d8cbfe]" style={{ height: bar.h }}>
            <div className="w-full rounded-t-[2px] bg-[#9672f9]" style={{ height: bar.dark }} />
          </div>
        ))}
      </div>
      <div className="relative w-[262px] border-l border-[#ececec] bg-[#fafafa] pl-[24px] font-['Noto_Sans',sans-serif] text-[8.6px] text-[#222]">
        <p className="h-[21px] leading-[13px]">Bar chart</p>
        <div className="h-[128px] w-[219px] border border-[#c9c9c9] bg-white pl-[18px] pt-[11px]">
          {machines.map((machine) => (
            <div key={machine.name} className={`h-[13px] pr-[5px] text-right text-[6.2px] leading-[13px] ${machine.style}`}>
              {machine.name}
            </div>
          ))}
        </div>
        <p className="mt-[18px] h-[22px] leading-[13px]">Column chart</p>
        <div className="h-[128px] w-[219px] border-[3px] border-[#4a90e2] bg-white">
          <svg width="213" height="122" viewBox="1 1 213 122">
            {columns.map(([total, purple, black], i) => (
              <g key={i}>
                <rect x={17 + i * 12.35} y={101 - total} width="10.6" height={total} fill="#d8cbfe" />
                <rect x={17 + i * 12.35} y={101 - purple} width="10.6" height={purple} fill="#9672f9" />
                <rect x={17 + i * 12.35} y={101 - black} width="10.6" height={black} fill="#2c2c30" />
              </g>
            ))}
          </svg>
        </div>
        <p className="mt-[17px] h-[21px] leading-[13px]">Pie chart</p>
        <div className="h-[128px] w-[219px] border border-[#dcdcdc] bg-white">
          <svg width="217" height="128" viewBox="0 0 217 128">
            <circle cx="109" cy="65" r="54.6" fill="#855cf8" />
            <path d="M109 65V10.4A54.6 54.6 0 0 1 147.3 26.1Z" fill="#000" />
            <path d="M109 65L147.3 26.1A54.6 54.6 0 0 1 163.6 65Z" fill="#533794" />
            <path d="M109 65H163.6A54.6 54.6 0 0 1 147.3 103.9Z" fill="#a686fa" />
          </svg>
        </div>
        <i className="absolute right-0 top-[25px] h-[150px] w-[6px] rounded-full bg-[#4a90e2]" />
      </div>
    </section>
  );
}

/* ------------------------------------------------------------------ */
/* Dimension chip states                                               */
/* ------------------------------------------------------------------ */

type ChipState = { label: string; row: string; chip: string; stacked: string; cursor?: boolean; badge?: "add" | "deny"; lift?: boolean; gray?: boolean };

const chipStates: ChipState[] = [
  { label: "Default", row: "h-[97px]", chip: "mt-[5px]", stacked: "mt-[5px]" },
  { label: "Hover", row: "h-[82px]", chip: "mt-[5px]", stacked: "mt-[4px]", lift: true, gray: true },
  { label: "Drag", row: "h-[89px]", chip: "mt-[6px]", stacked: "mt-[3px]", lift: true, cursor: true },
  { label: "Add (in drop zone)", row: "h-[100px]", chip: "mt-[6px]", stacked: "mt-[5px]", lift: true, badge: "add" },
  { label: "Cant add (not in drop zone)", row: "h-[80px]", chip: "mt-[8px]", stacked: "mt-[6px]", badge: "deny" },
];

function GrabCursor({ className }: { className: string }) {
  return (
    <svg className={`absolute ${className}`} width="19" height="19" viewBox="0 0 19 19">
      <path
        d="M4.500 8.500V5q0-1.500 1.400-1.500T7.300 5V3.500q0-1.500 1.400-1.500t1.400 1.500V3q0-1.500 1.400-1.500T12.900 3v1q0-1 1.300-1t1.300 1.500v6q0 2-1.300 3.500v3.500H6.500v-2.500L2.800 11q-.8-1.800.2-2.300.9-.4 1.500-.2z"
        fill="#fff"
        stroke="#222"
        strokeWidth="1.3"
        strokeLinejoin="round"
      />
      <path d="M7.800 8.500V13M10.200 8.500V13M12.600 8.500V13" stroke="#222" />
    </svg>
  );
}

function Badge({ kind }: { kind: "add" | "deny" }) {
  return (
    <svg className="absolute -left-[9px] top-[18px]" width="19" height="19" viewBox="0 0 19 19">
      <circle cx="9.5" cy="9.5" r="9.5" fill={kind === "add" ? "#0bd83a" : "#ff3131"} />
      <path d={kind === "add" ? "M9.500 4.500v10M4.500 9.500h10" : "M4.500 9.500h10"} stroke="#fff" strokeWidth="2.5" />
    </svg>
  );
}

function ChipColumn({ stacked, rule, inset, width }: { stacked?: boolean; rule: string; inset: string; width: string }) {
  return (
    <div className={`h-[465px] shrink-0 ${width}`}>
      <div className={`mt-[2px] h-[2px] bg-[#222] ${rule}`} />
      <div className={`mt-[33px] ${inset}`}>
        {chipStates.map((state) => (
          <div key={state.label} className={state.row}>
            <p className="whitespace-nowrap text-[13.3px] font-bold leading-5 tracking-[0.7px] text-[#111]">{state.label}</p>
            {stacked ? (
              <div className={`relative ml-[2px] w-[88px] ${state.stacked}`}>
                <div className={`absolute left-[3px] top-[4px] h-[28px] w-[86px] rounded-[3px] border-2 border-[#4a4a4a] ${state.gray ? "bg-[#999]" : "bg-white"}`} />
                <div className="relative flex h-[28px] w-[87px] items-center justify-center rounded-[3px] border-2 border-[#444] bg-white text-[14px] font-semibold tracking-[0.5px]">
                  Dimension
                </div>
                {state.cursor && <GrabCursor className="left-[28px] top-[19px]" />}
                {state.badge && <Badge kind={state.badge} />}
              </div>
            ) : (
              <div
                className={`relative flex h-[29px] w-[114px] items-center justify-between rounded-[3px] border-2 border-[#444] bg-white pl-[5px] pr-[4px] text-[14px] font-semibold tracking-[0.5px] ${state.chip} ${
                  state.lift ? "shadow-[0_2px_5px_rgba(0,0,0,0.22)]" : ""
                }`}
              >
                Dimension
                <span className="flex size-[19px] items-center justify-center rounded-[3px] bg-[#777885]">
                  <X size={12} color="#fff" strokeWidth={2.5} />
                </span>
                {state.cursor && <GrabCursor className="left-[40px] top-[19px]" />}
                {state.badge && <Badge kind={state.badge} />}
              </div>
            )}
          </div>
        ))}
      </div>
    </div>
  );
}

function ChipStatesPanel() {
  return (
    <section className="flex h-[465px] w-[1133px] gap-[44px] overflow-hidden rounded-[56px] bg-white font-['Lato',sans-serif] text-[#333]">
      <div className="bg-[#fafafa]">
        <ChipColumn stacked width="w-[414px]" rule="ml-[56px] w-[313px]" inset="ml-[131px]" />
      </div>
      <div className="flex w-[675px] bg-[#fafafa]">
        <ChipColumn width="w-[362px]" rule="ml-[52px] w-[313px]" inset="ml-[102px]" />
        <ChipColumn width="w-[313px]" rule="ml-[51px] w-[243px]" inset="ml-[103px]" />
      </div>
    </section>
  );
}

export default function App() {
  return (
    <main className="flex h-[1588px] w-[3297px] gap-[49px] overflow-hidden bg-white p-[48px] font-['Open_Sans',sans-serif]">
      <RecommendationsPanel />
      <ScreensPanel />
      <div className="flex flex-col gap-[48px]">
        <TablePanel />
        <ChartPickerPanel />
        <ChipStatesPanel />
      </div>
    </main>
  );
}
